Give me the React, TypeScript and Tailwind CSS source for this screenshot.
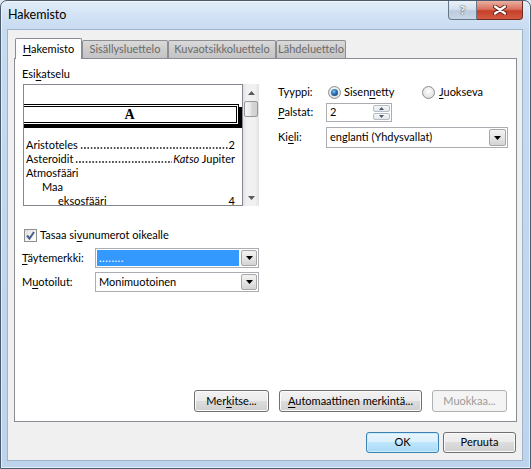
import React from 'react';

function U({ children }: { children: React.ReactNode }) {
  return <span className="underline underline-offset-[2px]">{children}</span>;
}

const btn =
  'flex items-center justify-center rounded-[3px] border border-[#707070] bg-[linear-gradient(180deg,#f2f2f2_0%,#ebebeb_49%,#dddddd_50%,#cfcfcf_100%)] shadow-[inset_0_0_0_1px_#fbfbfb]';

function DropArrow() {
  return (
    <div className="w-[16px] h-[16px] m-[1px] border border-[#a7a7a7] rounded-[2px] bg-[linear-gradient(180deg,#f2f2f2_0%,#e6e6e6_50%,#d4d4d4_100%)] flex items-center justify-center">
      <svg width="7" height="4" viewBox="0 0 7 4">
        <path d="M0 0 H7 L3.5 4 Z" fill="#000" />
      </svg>
    </div>
  );
}

function Radio({ checked }: { checked?: boolean }) {
  return (
    <div className="w-[13px] h-[13px] rounded-full border border-[#8a8e94] bg-[radial-gradient(circle_at_50%_40%,#ffffff_0%,#e6e6e6_60%,#cfd2d6_100%)] flex items-center justify-center">
      {checked && (
        <div className="w-[7px] h-[7px] rounded-full bg-[radial-gradient(circle_at_40%_35%,#7ec2f2_0%,#2a6fb0_45%,#0d2d55_100%)]" />
      )}
    </div>
  );
}

function Tri({ up }: { up?: boolean }) {
  return (
    <svg width="7" height="4" viewBox="0 0 7 4">
      <path d={up ? 'M0 4 H7 L3.5 0 Z' : 'M0 0 H7 L3.5 4 Z'} fill="#5b5b5b" />
    </svg>
  );
}

// dot leader drawn as a repeating dot pattern between the entry and its page
function Leader({ left, right }: { left: React.ReactNode; right: React.ReactNode }) {
  return (
    <div className="flex whitespace-nowrap">
      <span>{left}</span>
      <span className="flex-1 min-w-0 self-end mb-[3px] ml-[2px] h-[2px] bg-[radial-gradient(circle,#333_30%,transparent_55%)] bg-[length:3.3px_2px] bg-repeat-x" />
      <span className="ml-[1px]">{right}</span>
    </div>
  );
}

export default function App() {
  return (
    <div className="w-[531px] h-[469px] bg-[#dfe7f0] font-['Lato',sans-serif] text-[11px] text-black select-none">
      <div className="w-full h-full flex flex-col rounded-t-[7px] border border-[#4d5b6e] bg-[linear-gradient(180deg,#e3edf9_0px,#d3e3f5_14px,#c6daf0_30px,#bed4ed_100%)] shadow-[inset_0_0_0_1px_rgba(255,255,255,0.55)]">
        {/* title bar */}
        <div className="h-[28px] flex items-start shrink-0">
          <div className="pl-[7px] h-[28px] flex items-center text-[12.5px]">Hakemisto</div>
          <div className="ml-auto mr-[7px] flex h-[19px]">
            <div className="w-[29px] h-full border border-t-0 border-[#66768b] rounded-bl-[4px] bg-[linear-gradient(180deg,#eaf1f9_0%,#d5e1ee_45%,#bccbdd_55%,#c9d7e8_100%)] flex items-center justify-center text-[12px] font-bold text-white [text-shadow:0_0_2px_#3c4a5c,0_0_1px_#3c4a5c]">
              ?
            </div>
            <div className="w-[46px] h-full border border-t-0 border-l-0 border-[#6d2b22] rounded-br-[4px] bg-[linear-gradient(180deg,#eab0a3_0%,#d9725f_45%,#c63f28_55%,#d45a42_100%)] flex items-center justify-center">
              <svg width="14" height="10" viewBox="0 0 14 10">
                <path d="M2 1.5 L12 8.5 M12 1.5 L2 8.5" stroke="#5a2018" strokeWidth="4" strokeLinecap="round" />
                <path d="M2 1.5 L12 8.5 M12 1.5 L2 8.5" stroke="#ffffff" strokeWidth="2.2" strokeLinecap="round" />
              </svg>
            </div>
          </div>
        </div>

        {/* client */}
        <div className="ml-[6px] mr-[7px] mb-[7px] flex-1 border border-[#9fb3c9] bg-[#f0f0f0] flex flex-col pt-[8px]">
          {/* tabs */}
          <div className="flex items-end h-[20px] ml-[7px] relative z-10">
            <div className="w-[67px] h-[21px] -mb-[1px] bg-white border border-b-0 border-[#898c95] rounded-t-[2px] flex items-center justify-center">
              <span>
                <U>H</U>akemisto
              </span>
            </div>
            {[
              ['Sisällysluettelo', 'w-[86px]'],
              ['Kuvaotsikkoluettelo', 'w-[108px]'],
              ['Lähdeluettelo', 'w-[70px]'],
            ].map(([t, w]) => (
              <div
                key={t}
                className={`${w} h-[18px] border border-b-0 border-[#8c8e94] rounded-t-[2px] bg-[linear-gradient(180deg,#dadada_0%,#cdcdcd_50%,#c4c4c4_100%)] text-[#6a6a6a] flex items-center justify-center`}
              >
                {t}
              </div>
            ))}
          </div>

          {/* panel */}
          <div className="ml-[6px] w-[503px] h-[364px] border border-[#898c95] bg-white flex flex-col">
            <div className="flex">
              {/* left column */}
              <div className="ml-[7px] w-[237px] pt-[7px]">
                <div className="leading-[16px]">
                  Esi<U>k</U>atselu
                </div>
                <div className="mt-[2px] ml-[1px] flex h-[122px]">
                  <div className="w-[220px] h-full border border-[#828790] overflow-hidden">
                    <div className="mt-[19px] -ml-[4px] w-[219px] h-[21px] border-[3px] border-double border-black shadow-[3px_3px_0_#000] flex items-center justify-center font-['Liberation_Serif',serif] font-bold text-[14px]">
                      A
                    </div>
                    <div className="mt-[13px] pl-[2px] pr-[7px] leading-[14px]">
                      <Leader left="Aristoteles" right="2" />
                      <Leader
                        left="Asteroidit"
                        right={
                          <>
                            <i>Katso</i> Jupiter
                          </>
                        }
                      />
                      <div>Atmosfääri</div>
                      <div className="pl-[16px]">Maa</div>
                      <div className="pl-[32px] flex justify-between">
                        <span>eksosfääri</span>
                        <span>4</span>
                      </div>
                    </div>
                  </div>
                  {/* scrollbar */}
                  <div className="w-[16px] h-full bg-[linear-gradient(90deg,#e2e2e2_0%,#f1f1f1_25%,#f1f1f1_75%,#e2e2e2_100%)] flex flex-col">
                    <div className="h-[17px] flex items-center justify-center">
                      <Tri up />
                    </div>
                    <div className="h-[16px] mx-[1px] rounded-[2px] border border-[#979797] bg-[linear-gradient(90deg,#f4f4f4_0%,#e8e8e8_50%,#d9d9d9_51%,#cfcfcf_100%)]" />
                    <div className="flex-1" />
                    <div className="h-[17px] flex items-center justify-center">
                      <Tri />
                    </div>
                  </div>
                </div>

                {/* checkbox */}
                <div className="mt-[21px] h-[16px] flex items-center">
                  <div className="ml-[2px] w-[13px] h-[13px] border border-[#8e8f8f] bg-[linear-gradient(135deg,#dcdcdc_0%,#f6f6f6_60%,#ffffff_100%)] flex items-center justify-center">
                    <svg width="11" height="11" viewBox="0 0 11 11">
                      <path d="M2 5.5 L4.5 8.5 L9 2" fill="none" stroke="#4a5d8c" strokeWidth="2" />
                    </svg>
                  </div>
                  <span className="ml-[3px]">
                    Tasaa si<U>v</U>unumerot oikealle
                  </span>
                </div>

                {/* Täytemerkki */}
                <div className="mt-[5px] h-[20px] flex items-center">
                  <div className="w-[73px]">
                    <U>T</U>äytemerkki:
                  </div>
                  <div className="w-[164px] h-full border border-[#abadb3] flex">
                    <div className="flex-1 m-[1px] bg-[#3399ff] text-white pl-[2px] flex items-center tracking-[0.5px]">
                      ........
                    </div>
                    <DropArrow />
                  </div>
                </div>

                {/* Muotoilut */}
                <div className="mt-[4px] h-[20px] flex items-center">
                  <div className="w-[73px]">
                    M<U>u</U>otoilut:
                  </div>
                  <div className="w-[164px] h-full border border-[#abadb3] flex">
                    <div className="flex-1 pl-[3px] flex items-center">Monimuotoinen</div>
                    <DropArrow />
                  </div>
                </div>
              </div>

              {/* right column */}
              <div className="ml-[19px] pt-[25px]">
                <div className="h-[16px] flex items-center">
                  <div className="w-[50px]">Tyyppi:</div>
                  <div className="w-[94px] flex items-center">
                    <Radio checked />
                    <span className="ml-[3px]">
                      Sisen<U>n</U>etty
                    </span>
                  </div>
                  <Radio />
                  <span className="ml-[4px]">
                    <U>J</U>uokseva
                  </span>
                </div>

                <div className="mt-[3px] h-[19px] flex items-center">
                  <div className="w-[48px]">
                    <U>P</U>alstat:
                  </div>
                  <div className="w-[66px] h-full border border-[#abadb3] flex">
                    <div className="flex-1 pl-[3px] flex items-center">2</div>
                    <div className="w-[19px] p-[1px] flex flex-col gap-[1px]">
                      <div className="flex-1 border border-[#b4bcc6] rounded-[2px] bg-[linear-gradient(180deg,#f6f7f9,#e3e7ec)] flex items-center justify-center">
                        <svg width="5" height="3" viewBox="0 0 5 3">
                          <path d="M0 3 H5 L2.5 0 Z" fill="#4c596a" />
                        </svg>
                      </div>
                      <div className="flex-1 border border-[#b4bcc6] rounded-[2px] bg-[linear-gradient(180deg,#f6f7f9,#e3e7ec)] flex items-center justify-center">
                        <svg width="5" height="3" viewBox="0 0 5 3">
                          <path d="M0 0 H5 L2.5 3 Z" fill="#4c596a" />
                        </svg>
                      </div>
                    </div>
                  </div>
                </div>

                <div className="mt-[5px] h-[21px] flex items-center">
                  <div className="w-[48px]">
                    Ki<U>e</U>li:
                  </div>
                  <div className="w-[182px] h-full border border-[#abadb3] flex">
                    <div className="flex-1 pl-[3px] flex items-center">englanti (Yhdysvallat)</div>
                    <div className="w-[17px] m-[1px] border border-[#a7a7a7] rounded-[2px] bg-[linear-gradient(180deg,#f2f2f2_0%,#e6e6e6_50%,#d4d4d4_100%)] flex items-center justify-center">
                      <svg width="7" height="4" viewBox="0 0 7 4">
                        <path d="M0 0 H7 L3.5 4 Z" fill="#000" />
                      </svg>
                    </div>
                  </div>
                </div>
              </div>
            </div>

            {/* panel buttons */}
            <div className="mt-auto pb-[9px] pr-[9px] flex justify-end gap-[10px]">
              <div className={`${btn} w-[75px] h-[22px]`}>
                <span>
                  Mer<U>k</U>itse...
                </span>
              </div>
              <div className={`${btn} w-[143px] h-[22px]`}>
                <span>
                  <U>A</U>utomaattinen merkintä...
                </span>
              </div>
              <div className="w-[75px] h-[22px] rounded-[3px] border border-[#adb2b5] bg-[#f4f4f4] text-[#9a9a9a] flex items-center justify-center">
                Muokkaa...
              </div>
            </div>
          </div>

          {/* dialog buttons */}
          <div className="mt-[10px] pr-[6px] flex justify-end gap-[4px]">
            <div className="w-[73px] h-[21px] rounded-[3px] border border-[#3c7fb1] bg-[linear-gradient(180deg,#eaf6fd_0%,#d9f0fc_49%,#bee6fd_50%,#a7d9f5_100%)] shadow-[inset_0_0_0_1px_#c9ecfc] flex items-center justify-center">
              OK
            </div>
            <div className={`${btn} w-[73px] h-[21px]`}>Peruuta</div>
          </div>
        </div>
      </div>
    </div>
  );
}
